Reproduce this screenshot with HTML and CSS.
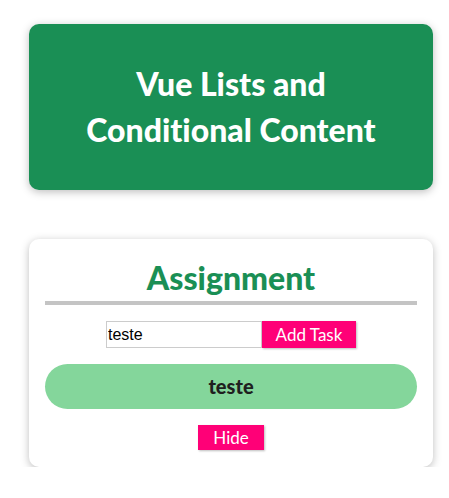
FILE: index.html
```html
<!DOCTYPE html>
<html>
<head>
<meta charset="utf-8">
<link rel="stylesheet" href="styles.css">
</head>
<body>
<header class="hero">
  <h1 class="hero-title">Vue Lists and Conditional Content</h1>
</header>
<section class="card">
  <h2 class="card-title">Assignment</h2>
  <div class="task-form">
    <input class="task-input" type="text" value="teste">
    <button class="btn">Add Task</button>
  </div>
  <ul class="task-list">
    <li class="task-item">teste</li>
  </ul>
  <div class="actions">
    <button class="btn">Hide</button>
  </div>
</section>
</body>
</html>
```

FILE: styles.css
```css
* { box-sizing: border-box; }
html { font-family: "Lato", "Noto Sans", sans-serif; font-variant-ligatures: none; }
body { margin: 0; background: #fff; }

.hero {
  box-shadow: 0 2px 8px rgba(0, 0, 0, 0.26);
  margin: 24px 16px 0 29px;
  border-radius: 10px;
  padding: 16px;
  background-color: #1a8f55;
  color: #fff;
  text-align: center;
  height: 166px;
  display: flex;
  align-items: center;
  justify-content: center;
}
.hero-title {
  margin: 0;
  font-size: 32px;
  line-height: 46px;
  font-weight: 900;
  width: 300px;
}

.card {
  box-shadow: 0 2px 8px rgba(0, 0, 0, 0.26);
  margin: 49px 16px 0 29px;
  border-radius: 10px;
  padding: 16px;
  text-align: center;
  height: 228px;
}
.card-title {
  font-size: 32px;
  line-height: 46px;
  font-weight: 900;
  border-bottom: 4px solid #c4c4c4;
  color: #1a8f55;
  margin: 0 0 16px 0;
}
.task-form {
  display: flex;
  justify-content: center;
}
.task-input {
  font-family: "Liberation Sans", Arial, sans-serif;
  font-size: 16px;
  border: 1px solid #ccc;
  width: 156px;
  height: 27px;
  padding: 1px 1px;
  margin: 0;
  color: #000;
}
.btn {
  font-family: "Lato", sans-serif;
  font-size: 17px;
  line-height: 23px;
  white-space: nowrap;
  cursor: pointer;
  border: 1px solid #ff0077;
  background-color: #ff0077;
  color: #fff;
  padding: 0;
  margin: 0;
  box-shadow: 1px 1px 2px rgba(0, 0, 0, 0.26);
}
.task-form .btn { width: 94px; height: 27px; }
.task-list {
  list-style: none;
  margin: 16px 0;
  padding: 0;
}
.task-item {
  font-size: 20px;
  line-height: 29px;
  font-weight: 900;
  background-color: #84d69b;
  padding: 8px;
  color: #1f1f1f;
  border-radius: 25px;
}
.actions { display: flex; justify-content: center; }
.actions .btn { width: 66px; height: 25px; }
```
